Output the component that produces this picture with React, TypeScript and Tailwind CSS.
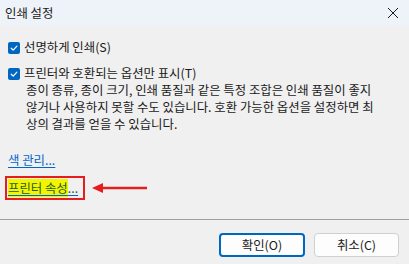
import React from "react";

const font = { fontFamily: '"Noto Sans CJK KR", "Noto Sans", sans-serif' };

function Check() {
  return (
    <div className="w-[12px] h-[12px] rounded-[2px] bg-[#0067c0] flex items-center justify-center shrink-0">
      <svg width="10" height="10" viewBox="0 0 10 10">
        <path d="M2.2 5.2 L4.2 7.1 L7.9 3.1" fill="none" stroke="white" strokeWidth="1.2" strokeLinecap="round" strokeLinejoin="round" />
      </svg>
    </div>
  );
}

export default function App() {
  return (
    <div className="w-[409px] h-[264px] bg-[#f0f0f0] flex flex-col text-[12.4px] leading-[17px] text-[#1a1a1a] overflow-hidden" style={font}>
      <div className="h-[26px] bg-[#eef3f9] flex items-center justify-between pl-[5px] pr-[8px] shrink-0">
        <span className="text-[12.4px]">인쇄 설정</span>
        <svg width="12" height="12" viewBox="0 0 12 12" className="mr-[2px]">
          <path d="M1 1 L11 11 M11 1 L1 11" stroke="#1a1a1a" strokeWidth="1" />
        </svg>
      </div>
      <div className="flex-1 flex flex-col pt-[13px]">
        <div className="flex items-center pl-[8px] gap-[4px]">
          <Check />
          <span className="whitespace-nowrap">선명하게 인쇄(S)</span>
        </div>
        <div className="flex items-center pl-[8px] gap-[4px] mt-[9px]">
          <Check />
          <span className="whitespace-nowrap">프린터와 호환되는 옵션만 표시(T)</span>
        </div>
        <div className="pl-[26px] whitespace-nowrap">
          <div>종이 종류, 종이 크기, 인쇄 품질과 같은 특정 조합은 인쇄 품질이 좋지</div>
          <div>않거나 사용하지 못할 수도 있습니다. 호환 가능한 옵션을 설정하면 최</div>
          <div>상의 결과를 얻을 수 있습니다.</div>
        </div>
        <div className="pl-[8px] mt-[19px]">
          <span className="text-[#0066cc] underline underline-offset-[2px]">색 관리...</span>
        </div>
        <div className="flex items-center pl-[5px] mt-[7px]">
          <div className="h-[24px] w-[80px] border-2 border-[#e51d1d] flex items-center pl-[1px]">
            <span className="text-[#1d5e26] underline decoration-[#0066cc] underline-offset-[2px] whitespace-nowrap">
              <span className="bg-[#f3f500]">프린터 속성</span>...
            </span>
          </div>
          <svg width="56" height="12" viewBox="0 0 56 12" className="ml-[7px]">
            <path d="M0 6 L11 1 L11 11 Z" fill="#e51d1d" />
            <path d="M10 6 L55 6" stroke="#e51d1d" strokeWidth="2.5" />
          </svg>
        </div>
      </div>
      <div className="h-[1px] bg-[#a0a0a0] shrink-0" />
      <div className="h-[44px] shrink-0 flex items-start justify-end gap-[9px] pr-[10px] pt-[13px]">
        <button className="w-[86px] h-[24px] rounded-[4px] bg-[#fdfdfd] border-2 border-[#0067c0] flex items-center justify-center text-[12.4px]" style={font}>확인(O)</button>
        <button className="w-[85px] h-[24px] rounded-[4px] bg-[#fdfdfd] border border-[#d0d0d0] flex items-center justify-center text-[12.4px]" style={font}>취소(C)</button>
      </div>
    </div>
  );
}
